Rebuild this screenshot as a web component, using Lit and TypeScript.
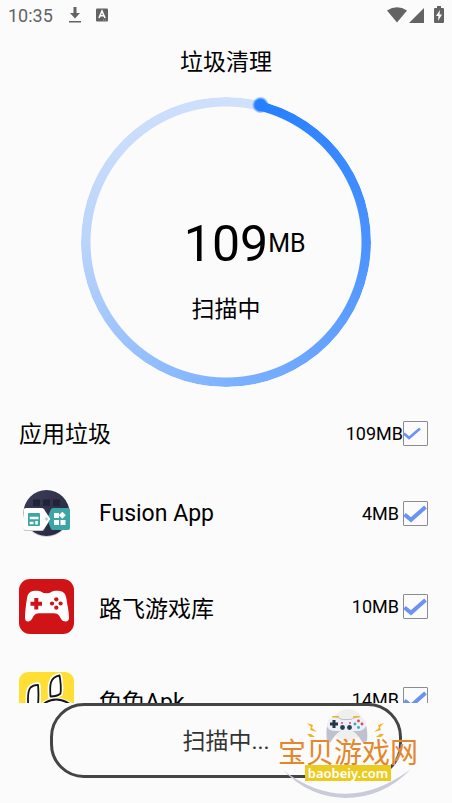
import { LitElement, html, css, svg } from "lit";
import { customElement, property } from "lit/decorators.js";

const fusionIcon = html`<svg viewBox="0 0 55 55" aria-hidden="true">
  <defs><linearGradient id="night" x1="0" y1="0" x2="1" y2="1"><stop offset="0" stop-color="#3b3d58"/><stop offset="1" stop-color="#25283c"/></linearGradient></defs>
  <circle cx="27.5" cy="28" r="23" fill="#d4d4d8"/>
  <circle cx="27.5" cy="27" r="23" fill="url(#night)"/>
  <g fill="#20233a"><rect x="14" y="13.5" width="7" height="6.5"/><rect x="24" y="13.5" width="7" height="6.5"/><rect x="34" y="13.5" width="7" height="6.5"/></g>
  <path d="M6.500 23.300H23.500L31.300 33.300 24 45H6.500Q4.700 45 4.700 43Z" fill="#c4c8cc"/>
  <path d="M34 22H49Q51 22 51 24V42Q51 44 49 44H34Q32.500 44 31.800 42.500L28 33 31.800 23.500Q32.500 22 34 22Z" fill="#3da5a6"/>
  <path d="M7 22H22.500Q24 22 25 23.200L31.300 33 25 42.800Q24 44 22.500 44H7Q4.700 44 4.700 42V24Q4.700 22 7 22Z" fill="#fff"/>
  <path d="M25.500 33L27.500 31 29.500 33 27.500 35Z" fill="#c9cdd0"/>
  <rect x="9" y="27" width="12" height="13" rx="1" fill="#3da5a6"/>
  <path d="M10.700 32H19.500M10.700 37H14.500M17.500 35V38.500" stroke="#fff" stroke-width="2.600"/>
  <g fill="#fff"><rect x="35" y="27" width="5" height="5"/><rect x="35" y="34" width="5" height="5"/><rect x="41.500" y="34" width="5" height="5"/><path d="M43.300 25.800L46.800 29.300 43.300 32.800 39.800 29.300Z"/></g>
</svg>`;

const padIcon = html`<svg viewBox="0 0 55 55" aria-hidden="true">
  <rect width="55" height="55" rx="11" fill="#d01317"/>
  <path d="M14 12C17 11.500 21 11.800 23 13.300Q24.500 14.300 27.500 14.300T32 13.300C34 11.800 38 11.500 41 12Q46.500 13 47.300 19C48.300 26 50 33 50 38.500Q50 42.500 46.500 42.500C43 42.500 42 39.500 40 36.500Q38.500 34.300 35 34.300H20Q16.500 34.300 15 36.500C13 39.500 12 42.500 9 42.500Q6 42.500 6 38.500C6 33 7 26 8 19Q8.800 13 14 12Z" fill="#fff"/>
  <path d="M17.300 19V30.500M11.500 24.700H23" stroke="#d01317" stroke-width="4"/>
  <g fill="#d01317"><circle cx="37.300" cy="20.300" r="2.100"/><circle cx="37.300" cy="28.700" r="2.100"/><circle cx="33" cy="24.500" r="2.100"/><circle cx="41.600" cy="24.500" r="2.100"/></g>
</svg>`;

const rabbitIcon = html`<svg viewBox="0 0 55 55" aria-hidden="true">
  <rect width="55" height="55" rx="9" fill="#ffdf33"/>
  <g stroke-linejoin="round">
    <g fill="#fff" stroke="#fff" stroke-width="5"><path d="M9.500 36C8.500 26 8.500 19 11.500 15.500Q14 13 19 12.800Q20 22 18.800 36Z"/><path d="M31.500 24.500C30.500 13 31 5 40.500 3.500Q42.500 14 41.500 21.500Q38 24.500 31.500 24.500Z"/><path d="M25 32Q36 24 50 32V50H25Z"/></g>
    <g fill="#fff" stroke="#151515" stroke-width="1.800"><path d="M9.500 36C8.500 26 8.500 19 11.500 15.500Q14 13 19 12.800Q20 22 18.800 36Z"/><path d="M31.500 24.500C30.500 13 31 5 40.500 3.500Q42.500 14 41.500 21.500Q38 24.500 31.500 24.500Z"/><path d="M25 31.500Q37 23.500 50 31.500V50H25Z"/></g>
  </g>
</svg>`;

@customElement("tick-box")
class TickBox extends LitElement {
  @property() name = "";
  @property({ type: Boolean }) small = false;

  static styles = css`
    :host { display: block; }
    label { display: grid; width: 25px; height: 25px; }
    input, svg { grid-area: 1 / 1; width: 25px; height: 25px; margin: 0; }
    input { appearance: none; box-sizing: border-box; border: 1px solid #8c8c8c; border-radius: 1px; }
    svg { pointer-events: none; fill: none; stroke: #6c93f1; opacity: 0; }
    input:checked + svg { opacity: 1; }
  `;

  render() {
    return html`<label>
      <input type="checkbox" checked aria-label=${this.name} />
      <svg viewBox="0 0 25 25" aria-hidden="true">
        ${this.small
          ? svg`<path d="M1 12.500L6 17 17 7.500" stroke-width="2.600"/>`
          : svg`<path d="M1.500 13.500L8 18.800 22.500 6" stroke-width="4"/>`}
      </svg>
    </label>`;
  }
}

@customElement("scan-ring")
class ScanRing extends LitElement {
  static styles = css`
    :host { display: grid; width: 290px; height: 290px; }
    .track, .dot, .info { grid-area: 1 / 1; }
    .track {
      border-radius: 50%;
      background: conic-gradient(from 14deg, #267fff, #4b92ff 21%, #7eb2ff 46%, #9cc3fd 59%, #bad4fb 71%, #c9dcfb 83%, #d0e1fb);
      mask: radial-gradient(circle closest-side, transparent 135px, #000 136px);
    }
    .dot { z-index: 1; width: 290px; height: 290px; }
    .info { display: flex; flex-direction: column; align-items: center; padding-top: 117px; }
    .total { display: grid; grid-template-columns: 1fr auto 1fr; align-items: center; width: 100%; line-height: 60px; }
    .number { grid-column: 2; font-size: 50px; }
    .unit { font-size: 25px; }
    .state { margin-top: 19px; font-size: 23px; line-height: 34px; }
  `;

  render() {
    return html`
      <div class="track"></div>
      <svg class="dot" viewBox="0 0 290 290" aria-hidden="true">
        <defs><radialGradient id="glow"><stop offset="0.650" stop-color="#267fff"/><stop offset="1" stop-color="#267fff" stop-opacity="0"/></radialGradient></defs>
        <circle cx="179.500" cy="8" r="8.500" fill="url(#glow)"/>
      </svg>
      <div class="info">
        <div class="total"><span class="number">109</span><span class="unit">MB</span></div>
        <div class="state">扫描中</div>
      </div>`;
  }
}

@customElement("site-badge")
class SiteBadge extends LitElement {
  static styles = css`
    :host { display: block; width: 142px; height: 92px; }
    .art { position: absolute; inset: 0; width: 142px; height: 92px; }
    .words { position: relative; display: flex; flex-direction: column; align-items: center; padding-top: 31px; }
    .name { color: #e3872a; font: 400 28px/28px "Noto Sans CJK SC", sans-serif; text-shadow: 0 0 1px #fff; white-space: nowrap; }
    .link { width: 86px; color: #fff; background: #eccb20; font: 600 13px/16px "Noto Sans", sans-serif; text-align: center; text-decoration: none; }
  `;

  render() {
    return html`
      <svg class="art" viewBox="0 0 142 92" aria-hidden="true">
        <circle cx="71" cy="19" r="16" fill="#efefee"/>
        <path d="M6 64Q68 112 134 63Q106 92 68 92Q32 91 6 64Z" fill="#c9cbd9"/>
        <g fill="#f0b323">
          <path d="M30 17L36 19 35 22 40 26 33 24 34 21Z"/><path d="M107 17L101 19 102 22 97 26 104 24 103 21Z"/>
          <path d="M30 28L34 28 38 31 33 31Z"/><path d="M107 28L103 28 99 31 104 31Z"/>
          <rect x="55" y="10" width="7" height="2" rx="1"/><rect x="76" y="10" width="7" height="2" rx="1"/>
        </g>
        <path d="M53 13C57 11 63 11 65 13H74C76 11 82 11 86 13C90 18 91 28 90 35L86 37C82 31 79 26 75 25H64C60 26 57 31 53 37L50 35C49 28 49 18 53 13Z" fill="#bfc1ce"/>
        <path d="M54 12C58 11 62 12 65 14H74C77 12 81 11 85 12Q90 14 89 20Q87 25 80 25H59Q51 25 50 20Q50 14 54 12Z" fill="#eef0f5"/>
        <path d="M57 14V22M53 18H61" stroke="#253548" stroke-width="3"/>
        <g fill="#253f57"><circle cx="65.500" cy="21.500" r="2.400"/><circle cx="72.500" cy="21.500" r="2.400"/></g>
        <g fill="#d94759"><circle cx="81.500" cy="15" r="1.400"/><circle cx="85" cy="18" r="1.400"/><circle cx="65" cy="17" r="1"/><circle cx="73" cy="17" r="1"/></g>
        <g fill="#35a6cd"><circle cx="78" cy="18" r="1.400"/><circle cx="81.500" cy="21.500" r="1.400"/></g>
      </svg>
      <div class="words"><span class="name">宝贝游戏网</span><a class="link" href="#">baobeiy.com</a></div>`;
  }
}

@customElement("app-root")
class AppRoot extends LitElement {
  private apps = [
    { name: "Fusion App", size: "4MB", icon: fusionIcon },
    { name: "路飞游戏库", size: "10MB", icon: padIcon },
    { name: "兔兔Apk", size: "14MB", icon: rabbitIcon },
  ];

  static styles = css`
    :host {
      position: relative;
      display: flex;
      flex-direction: column;
      height: 100vh;
      overflow: hidden;
      background: #fbfbfb;
      color: #000;
      font-family: Roboto, "Noto Sans CJK SC", sans-serif;
    }
    .status { display: flex; align-items: center; height: 30px; padding: 0 8px; color: #636363; fill: #636363; font-size: 18px; box-sizing: border-box; }
    .status svg { display: block; height: 18px; }
    .down { width: 14px; margin-left: 15px; }
    .lang { width: 12px; margin-left: 14px; }
    .signals { display: flex; margin-left: auto; }
    .wifi { width: 20px; }
    .cell { width: 16px; margin-left: 2px; }
    .battery { width: 10px; margin-left: 9px; }
    h1, h2 { margin: 0; font-weight: 400; font-size: 23px; line-height: 34px; }
    h1 { margin: 16px 0 17px; text-align: center; }
    h2 { padding-top: 4px; }
    scan-ring { align-self: center; flex: none; }
    .group, li { display: flex; align-items: center; padding: 0 24px 0 19px; }
    .group { height: 36px; margin-top: 28px; }
    .size { margin-left: auto; font-size: 18px; }
    .list { flex: 1; min-height: 0; margin: 16px 0 0; padding: 0; overflow: hidden; list-style: none; }
    li { height: 93px; }
    li svg { width: 55px; height: 55px; }
    .name { margin-left: 25px; font-size: 23px; }
    li tick-box { margin-left: 4px; }
    .foot { flex: none; padding: 0 50px 25px; }
    .toast { box-sizing: border-box; height: 75px; border: 3px solid #444; border-radius: 34px; color: #333; font-size: 23px; line-height: 71px; text-align: center; }
    site-badge { position: absolute; right: 33px; bottom: 5px; }
  `;

  render() {
    return html`
      <header class="status">
        <span>10:35</span>
        <svg class="down" viewBox="0 0 14 18" aria-hidden="true"><path d="M5.500 1H8.500V7H12L7 12.500 2 7H5.500ZM1 15H13V16.500H1Z"/></svg>
        <svg class="lang" viewBox="0 0 12 18" aria-hidden="true"><rect y="2.500" width="12" height="13" rx="1"/><path d="M3 12L6 5 9 12M4.200 9.700H7.800" fill="none" stroke="#fff" stroke-width="1.600"/><path d="M7 14H11" stroke="#aaa" stroke-dasharray="1 1"/></svg>
        <div class="signals">
          <svg class="wifi" viewBox="0 0 20 18" aria-hidden="true"><path d="M0 4.500Q10-2 20 4.500L10 16.500Z"/></svg>
          <svg class="cell" viewBox="0 0 16 18" aria-hidden="true"><path d="M15 2V17H0Z"/></svg>
          <svg class="battery" viewBox="0 0 10 18" aria-hidden="true"><path d="M3 0H7V2H9Q10 2 10 3V16Q10 17 9 17H1Q0 17 0 16V3Q0 2 1 2H3Z"/><path d="M6 4L2 10H4.500L4 15 8 8.500H5.500Z" fill="#fff"/></svg>
        </div>
      </header>
      <h1>垃圾清理</h1>
      <scan-ring></scan-ring>
      <div class="group"><h2>应用垃圾</h2><span class="size">109MB</span><tick-box small name="应用垃圾"></tick-box></div>
      <ul class="list">
        ${this.apps.map((app) => html`<li>${app.icon}<span class="name">${app.name}</span><span class="size">${app.size}</span><tick-box name=${app.name}></tick-box></li>`)}
      </ul>
      <footer class="foot"><div class="toast" role="status">扫描中...</div></footer>
      <site-badge></site-badge>`;
  }
}
